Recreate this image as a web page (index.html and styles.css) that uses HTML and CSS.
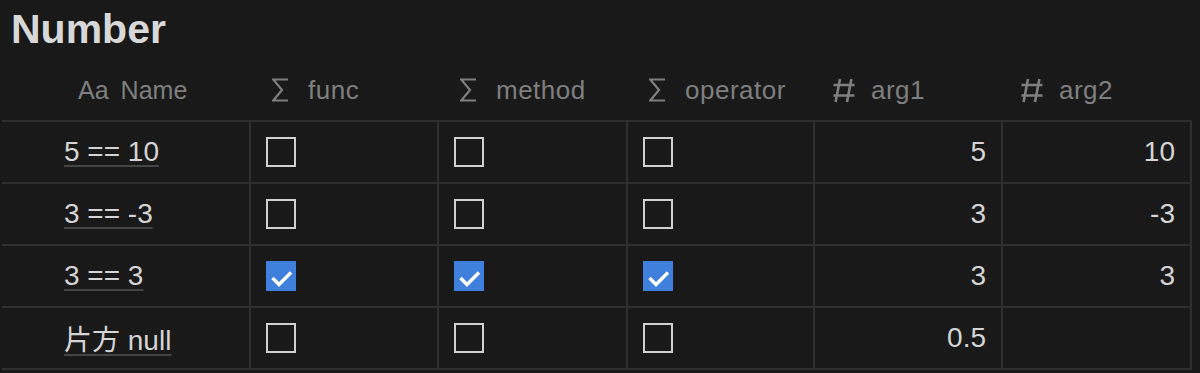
FILE: index.html
```html
<!DOCTYPE html>
<html lang="ja">
<head>
<meta charset="utf-8">
<title>Number</title>
<link rel="stylesheet" href="styles.css">
</head>
<body>
<div class="db">
  <h1 class="title">Number</h1>
  <div class="table">
    <div class="row head">
      <div class="hcell hname"><span class="aa">Aa</span><span>Name</span></div>
      <div class="hcell"><svg class="ico sigma" viewBox="0 0 17 24"><path d="M16 1.5H1.2L10 12L1.2 22.5H16"/></svg><span>func</span></div>
      <div class="hcell"><svg class="ico sigma" viewBox="0 0 17 24"><path d="M16 1.5H1.2L10 12L1.2 22.5H16"/></svg><span>method</span></div>
      <div class="hcell"><svg class="ico sigma" viewBox="0 0 17 24"><path d="M16 1.5H1.2L10 12L1.2 22.5H16"/></svg><span>operator</span></div>
      <div class="hcell hnum"><svg class="ico hash" viewBox="0 0 22 25"><path d="M7 1L2.6 24M18.4 1L14 24M0.5 7H21.5M0.5 17.5H21.5"/></svg><span>arg1</span></div>
      <div class="hcell hnum"><svg class="ico hash" viewBox="0 0 22 25"><path d="M7 1L2.6 24M18.4 1L14 24M0.5 7H21.5M0.5 17.5H21.5"/></svg><span>arg2</span></div>
    </div>

    <div class="row">
      <div class="cell name"><span class="link">5 == 10</span></div>
      <div class="cell chk"><span class="box"></span></div>
      <div class="cell chk"><span class="box"></span></div>
      <div class="cell chk"><span class="box"></span></div>
      <div class="cell num">5</div>
      <div class="cell num">10</div>
    </div>

    <div class="row">
      <div class="cell name"><span class="link">3 == -3</span></div>
      <div class="cell chk"><span class="box"></span></div>
      <div class="cell chk"><span class="box"></span></div>
      <div class="cell chk"><span class="box"></span></div>
      <div class="cell num">3</div>
      <div class="cell num">-3</div>
    </div>

    <div class="row">
      <div class="cell name"><span class="link">3 == 3</span></div>
      <div class="cell chk"><span class="box on"><svg viewBox="0 0 30 30"><path d="M6.5 17L13 23.5L25 11.5"/></svg></span></div>
      <div class="cell chk"><span class="box on"><svg viewBox="0 0 30 30"><path d="M6.5 17L13 23.5L25 11.5"/></svg></span></div>
      <div class="cell chk"><span class="box on"><svg viewBox="0 0 30 30"><path d="M6.5 17L13 23.5L25 11.5"/></svg></span></div>
      <div class="cell num">3</div>
      <div class="cell num">3</div>
    </div>

    <div class="row">
      <div class="cell name"><span class="link">片方 null</span></div>
      <div class="cell chk"><span class="box"></span></div>
      <div class="cell chk"><span class="box"></span></div>
      <div class="cell chk"><span class="box"></span></div>
      <div class="cell num">0.5</div>
      <div class="cell num"></div>
    </div>
  </div>
</div>
</body>
</html>
```

FILE: styles.css
```css
html, body {
  margin: 0;
  padding: 0;
  background: #191919;
}

body {
  font-family: "Liberation Sans", "Noto Sans CJK JP", sans-serif;
  color: #d4d4d4;
  width: 1200px;
  height: 373px;
  overflow: hidden;
}

.db {
  display: flex;
  flex-direction: column;
}

.title {
  margin: 0;
  height: 60px;
  padding: 5px 0 0 11px;
  box-sizing: border-box;
  font-size: 41px;
  line-height: 48px;
  font-weight: 700;
  color: #d8d8d8;
}

.table {
  margin-left: 2px;
  width: 1190px;
  display: flex;
  flex-direction: column;
}

.row {
  display: grid;
  grid-template-columns: 249px 188px 189px 187px 188px 189px;
  height: 62px;
  border-bottom: 2px solid #2f2f2f;
  box-sizing: border-box;
}

.hcell {
  display: flex;
  align-items: center;
  padding-left: 21px;
  font-size: 26px;
  letter-spacing: 0.5px;
  color: #7f7f7f;
}

.hname {
  padding-left: 76px;
  font-size: 25px;
  letter-spacing: 0;
}

.hnum {
  padding-left: 18px;
}

.aa {
  margin-right: 12px;
}

.ico {
  fill: none;
  stroke: #7f7f7f;
  flex: none;
}

.sigma {
  width: 17px;
  height: 24px;
  margin-right: 19px;
  stroke-width: 2.2;
  stroke-linejoin: miter;
}

.hash {
  width: 22px;
  height: 25px;
  margin-right: 16px;
  stroke-width: 2.6;
}

.cell {
  display: flex;
  align-items: center;
  border-right: 2px solid #2f2f2f;
  font-size: 28px;
  color: #d4d4d4;
  min-width: 0;
}

.name {
  padding-left: 62px;
}

.link {
  text-decoration: underline;
  text-decoration-color: #454545;
  text-decoration-thickness: 2px;
  text-underline-offset: 4px;
}

.chk {
  padding-left: 15px;
}

.box {
  width: 30px;
  height: 30px;
  box-sizing: border-box;
  border: 2px solid #d0d0d0;
  display: flex;
}

.box.on {
  border: none;
  background: #3e80dc;
}

.box.on svg {
  width: 30px;
  height: 30px;
  fill: none;
  stroke: #ffffff;
  stroke-width: 3.4;
}

.num {
  justify-content: flex-end;
  padding-right: 15px;
}
```
